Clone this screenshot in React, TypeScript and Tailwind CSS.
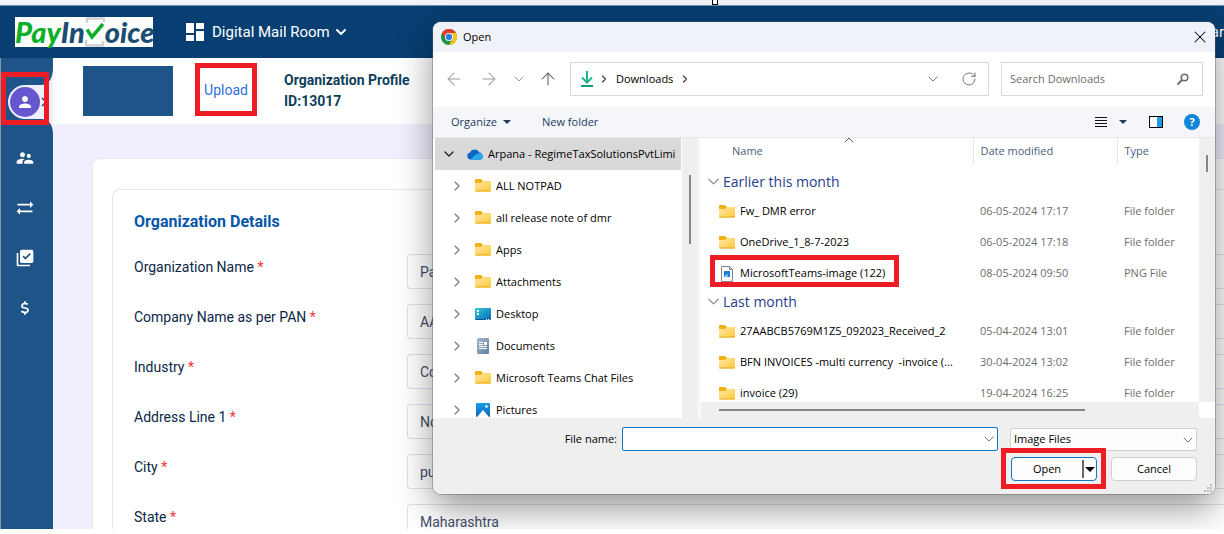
import type { ReactNode } from "react";
import { FaDollarSign } from "react-icons/fa6";
import {
  MdDashboard,
  MdLibraryAddCheck,
  MdPerson,
  MdSupervisorAccount,
  MdSyncAlt,
} from "react-icons/md";
import {
  ArrowLeft,
  ArrowRight,
  ArrowUp,
  ChevronDown,
  ChevronRight,
  ChevronUp,
  RotateCw,
  X,
} from "lucide-react";

type IconKind = "folder" | "desktop" | "documents" | "pictures" | "png";

interface FileRow {
  name: string;
  modified: string;
  type: string;
  icon: IconKind;
  marked?: boolean;
}

const fields = [
  { id: "org-name", label: "Organization Name", value: "Pa" },
  { id: "pan-name", label: "Company Name as per PAN", value: "AA" },
  { id: "industry", label: "Industry", value: "Co" },
  { id: "address", label: "Address Line 1", value: "No" },
  { id: "city", label: "City", value: "pu" },
  { id: "state", label: "State", value: "Maharashtra" },
];

const treeItems: { name: string; icon: IconKind }[] = [
  { name: "ALL NOTPAD", icon: "folder" },
  { name: "all release note of dmr", icon: "folder" },
  { name: "Apps", icon: "folder" },
  { name: "Attachments", icon: "folder" },
  { name: "Desktop", icon: "desktop" },
  { name: "Documents", icon: "documents" },
  { name: "Microsoft Teams Chat Files", icon: "folder" },
  { name: "Pictures", icon: "pictures" },
];

const groups: { title: string; rows: FileRow[] }[] = [
  {
    title: "Earlier this month",
    rows: [
      { name: "Fw_ DMR error", modified: "06-05-2024 17:17", type: "File folder", icon: "folder" },
      { name: "OneDrive_1_8-7-2023", modified: "06-05-2024 17:18", type: "File folder", icon: "folder" },
      { name: "MicrosoftTeams-image (122)", modified: "08-05-2024 09:50", type: "PNG File", icon: "png", marked: true },
    ],
  },
  {
    title: "Last month",
    rows: [
      { name: "27AABCB5769M1Z5_092023_Received_2", modified: "05-04-2024 13:01", type: "File folder", icon: "folder" },
      { name: "BFN INVOICES -multi currency  -invoice (...", modified: "30-04-2024 13:02", type: "File folder", icon: "folder" },
      { name: "invoice (29)", modified: "19-04-2024 16:25", type: "File folder", icon: "folder" },
    ],
  },
];

function FileIcon({ kind }: { kind: IconKind }) {
  if (kind === "desktop") {
    return (
      <svg viewBox="0 0 16 16" className="size-4 shrink-0" aria-hidden>
        <defs>
          <linearGradient id="desk" x1="0" y1="0" x2="1" y2="1">
            <stop offset="0" stopColor="#35c9dc" />
            <stop offset="1" stopColor="#0a66b8" />
          </linearGradient>
        </defs>
        <rect x="0" y="2" width="16" height="12" rx="1" fill="url(#desk)" />
        <path d="M2 4h2v2H2zM2 7h2v2H2z" fill="#e8fbff" />
        <path d="M0 13h11v1H1z" fill="#075a9e" />
        <path d="M11 13h1v1h-1zM13 13h1v1h-1z" fill="#fff" />
      </svg>
    );
  }
  if (kind === "documents") {
    return (
      <svg viewBox="0 0 16 16" className="size-4 shrink-0" aria-hidden>
        <defs>
          <linearGradient id="docs" x1="0" y1="0" x2="1" y2="1">
            <stop offset="0" stopColor="#a9bccf" />
            <stop offset="1" stopColor="#5d7ea3" />
          </linearGradient>
        </defs>
        <rect x="2" y="0" width="12" height="16" rx="1" fill="url(#docs)" />
        <path d="M4 4h4v1H4zM4 6h4v1H4zM9 4h3v3H9zM4 8h8v1H4zM4 10h8v1H4z" fill="#fff" />
      </svg>
    );
  }
  if (kind === "pictures") {
    return (
      <svg viewBox="0 0 16 16" className="size-4 shrink-0" aria-hidden>
        <defs>
          <linearGradient id="pics" x1="0" y1="0" x2="0" y2="1">
            <stop offset="0" stopColor="#1b9ae6" />
            <stop offset="1" stopColor="#0a67b8" />
          </linearGradient>
        </defs>
        <rect x="1" y="1" width="14" height="14" rx="1" fill="url(#pics)" />
        <path d="M2 15 8 8 14 15z" fill="#fff" />
        <circle cx="11.5" cy="4.5" r="1.3" fill="#fff" />
      </svg>
    );
  }
  if (kind === "png") {
    return (
      <svg viewBox="0 0 16 16" className="size-4 shrink-0" aria-hidden>
        <path d="M2.5 0.5H10.5L13.5 3.5V15.5H2.5Z" fill="#fafafa" stroke="#858585" />
        <path d="M10.5 0.5V3.5H13.5" fill="none" stroke="#858585" />
        <rect x="5" y="5" width="6" height="6" fill="#1a7fd4" />
        <path d="M5 11 8 8 9 9 8 11z" fill="#8fd0ff" />
      </svg>
    );
  }
  return (
    <svg viewBox="0 0 16 16" className="size-4 shrink-0" aria-hidden>
      <defs>
        <linearGradient id="folder" x1="0" y1="0" x2="1" y2="1">
          <stop offset="0" stopColor="#ffe9a8" />
          <stop offset="1" stopColor="#ffc83a" />
        </linearGradient>
      </defs>
      <path d="M0 2Q0 1 1 1H6L8 3H15Q16 3 16 4V8H0z" fill="#f5ae13" />
      <path d="M0 5H6L8 3H15Q16 3 16 4V12.5Q16 13.5 15 13.5H1Q0 13.5 0 12.5z" fill="url(#folder)" />
      <path d="M0 12.5H16Q16 13.5 15 13.5H1Q0 13.5 0 12.5z" fill="#e9a820" />
    </svg>
  );
}

function ChromeIcon() {
  return (
    <svg viewBox="0 0 48 48" className="size-4 shrink-0" aria-hidden>
      <circle cx="24" cy="24" r="24" fill="#229342" />
      <path d="M24 12H44.8A24 24 0 0 1 24 48L34.4 30z" fill="#fcc31e" />
      <path d="M13.6 30 3.2 12A24 24 0 0 1 44.8 12H24z" fill="#e33b2e" />
      <circle cx="24" cy="24" r="12" fill="#fff" />
      <circle cx="24" cy="24" r="9.5" fill="#2f7de9" />
    </svg>
  );
}

function Logo() {
  return (
    <a
      href="#"
      aria-label="PayInvoice"
      className="flex h-[30px] w-[138px] items-center bg-white font-[Lato,sans-serif] text-[29px] leading-[26px] font-black text-[#1b4e70] italic"
    >
      <span className="text-[#0db02b]">Pay</span>
      <span>In</span>
      <svg viewBox="0 0 20 30" className="h-[30px] w-5 shrink-0" aria-hidden>
        <path d="M2 6V1.5H19V5M1 23V28.5H18V24" fill="none" stroke="#cfd2d6" strokeWidth="2.5" />
        <path d="M2 12.5 7 20 18 7" fill="none" stroke="#0db02b" strokeWidth="3.5" />
      </svg>
      <span>oice</span>
    </a>
  );
}

function Header() {
  return (
    <header className="flex h-[53px] shrink-0 items-center justify-between border-t border-[#6f8fa9] bg-[#073f73] pl-[15px] font-[Roboto,sans-serif] text-[15px] text-white">
      <div className="flex items-center gap-[30px]">
        <Logo />
        <button type="button" className="flex items-center">
          <MdDashboard className="mr-[5px] size-6" aria-hidden />
          Digital Mail Room
          <ChevronDown className="ml-[3px] size-4" strokeWidth={3} aria-hidden />
        </button>
      </div>
      <span>ar</span>
    </header>
  );
}

function Sidebar() {
  const links = [
    { label: "Users", icon: <MdSupervisorAccount className="size-5" aria-hidden /> },
    { label: "Transfers", icon: <MdSyncAlt className="size-5" aria-hidden /> },
    { label: "Approvals", icon: <MdLibraryAddCheck className="size-5" aria-hidden /> },
    { label: "Payments", icon: <FaDollarSign className="size-[14px]" aria-hidden /> },
  ];

  return (
    <nav className="flex w-[53px] shrink-0 flex-col border-l border-[#8397a8] bg-[#1f5488] pt-[14px] text-white">
      <a href="#" aria-label="Profile" className="relative flex h-[53px] items-center pt-[7px]">
        <svg viewBox="0 0 52 74" className="absolute -top-2 left-0 h-[74px] w-[52px]" aria-hidden>
          <path d="M52 4C52 15 47 21 40 21H24A17 17 0 0 0 24 55H40C47 55 52 60 52 70Z" fill="#efeffd" />
          <path d="m41 34 4 4-4 4" fill="none" stroke="#3b4657" strokeWidth="1.5" />
        </svg>
        <span className="relative ml-[9px] grid size-[30px] place-items-center rounded-full bg-[#6558cf]">
          <MdPerson className="size-[18px]" aria-hidden />
        </span>
        <span className="absolute top-0 left-0 h-[53px] w-12 border-5 border-[#ee1c24]" />
      </a>
      <div className="mt-2 flex flex-col">
        {links.map((link) => (
          <a key={link.label} href="#" aria-label={link.label} className="flex h-[50px] items-center pl-[14px]">
            <span className="grid w-5 place-items-center">{link.icon}</span>
          </a>
        ))}
      </div>
    </nav>
  );
}

function ProfilePage() {
  return (
    <main className="min-w-0 flex-1 bg-[#efeffd] font-[Roboto,sans-serif]">
      <div className="flex h-[66px] items-center bg-white pl-[30px]">
        <div className="h-[50px] w-[90px] bg-[#1f5488]" />
        <button
          type="button"
          className="-mt-1 ml-[22px] h-[53px] w-[62px] border-5 border-[#ee1c24] pt-0.5 text-sm text-[#2f6fde]"
        >
          Upload
        </button>
        <div className="ml-[27px] text-sm leading-[21px] font-bold text-[#0d3f5c]">
          <p>Organization Profile</p>
          <p>ID:13017</p>
        </div>
      </div>

      <div className="mt-[34px] ml-[39px] rounded-tl-lg border-t border-l border-[#e3e9f6] bg-white pt-[30px] pl-[19px]">
        <form className="rounded-tl-lg border-t border-l border-[#dfe7f6] pt-5 pl-[21px]">
          <h2 className="mb-5 text-base leading-6 font-bold text-[#0757a8]">Organization Details</h2>
          {fields.map((field) => (
            <div key={field.id} className="flex h-[50px] items-start">
              <label htmlFor={field.id} className="w-[273px] shrink-0 text-sm leading-[26px] text-[#0b2747]">
                {field.label} <span className="text-[#f5333f]">*</span>
              </label>
              <input
                id={field.id}
                defaultValue={field.value}
                className="h-[35px] min-w-0 flex-1 rounded-l border border-r-0 border-[#d9e0e8] bg-white px-3 text-sm text-[#42506a]"
              />
            </div>
          ))}
        </form>
      </div>
    </main>
  );
}

function IconButton({ label, className = "", children }: { label: string; className?: string; children: ReactNode }) {
  return (
    <button type="button" aria-label={label} className={`grid place-items-center ${className}`}>
      {children}
    </button>
  );
}

function FolderTree() {
  return (
    <div className="ml-0.5 flex w-[263px] shrink-0 bg-[#efefef]">
      <ul className="h-full w-[247px] overflow-hidden bg-white">
        <li className="flex h-8 w-[246px] items-center bg-[#d9d9d9] pl-1.5 whitespace-nowrap">
          <ChevronDown className="size-4 shrink-0 text-[#222]" aria-hidden />
          <svg viewBox="0 0 16 11" className="mr-[5px] ml-[10px] h-[11px] w-4 shrink-0" aria-hidden>
            <path d="M3.5 10.5A3.5 3.5 0 0 1 3 3.6 5 5 0 0 1 12.3 3.5 3.6 3.6 0 0 1 13 10.5z" fill="#0b67c2" />
            <path d="M3 10.7 8.5 5.5 12.5 4.2A3.3 3.3 0 0 1 13 10.8H3.5z" fill="#2aa6ea" />
          </svg>
          Arpana - RegimeTaxSolutionsPvtLimi
        </li>
        {treeItems.map((item) => (
          <li key={item.name} className="flex h-8 items-center pl-[14px] whitespace-nowrap">
            <ChevronRight className="mr-[10px] size-4 shrink-0 text-[#858585]" aria-hidden />
            <FileIcon kind={item.icon} />
            <span className="ml-[5px]">{item.name}</span>
          </li>
        ))}
      </ul>
      <div className="mt-[37px] ml-[7px] h-[69px] w-0.5 bg-[#858585]" />
    </div>
  );
}

function FileList() {
  return (
    <div className="ml-px flex min-w-0 flex-1 border-l border-[#f0f0f0] pl-px">
      <div className="flex min-w-0 flex-1 flex-col">
        <div className="relative h-[264px] overflow-hidden">
          <ChevronUp className="absolute top-[-6px] left-[140px] size-4 text-[#555]" strokeWidth={1.5} aria-hidden />
          <table className="w-full table-fixed border-collapse text-left">
            <thead className="text-[#4c607a]">
              <tr className="h-[26px]">
                <th className="border-r border-[#e5e5e5] pl-[31px] font-normal">Name</th>
                <th className="w-36 border-r border-[#e5e5e5] pl-[7px] font-normal">Date modified</th>
                <th className="w-[82px] pl-[7px] font-normal">Type</th>
              </tr>
              <tr className="h-[5px]">
                <td colSpan={3} />
              </tr>
            </thead>
            {groups.map((group) => (
              <tbody key={group.title}>
                <tr className="h-[27px]">
                  <th colSpan={3} className="pb-0.5 pl-[3px] text-sm leading-5 font-normal text-[#26408b]">
                    <span className="flex items-center">
                      <ChevronDown className="size-[19px] text-[#858585]" strokeWidth={1.5} aria-hidden />
                      {group.title}
                    </span>
                  </th>
                </tr>
                {group.rows.map((row) => (
                  <tr key={row.name} className="h-[31px] text-[#6d6d6d]">
                    <td className="relative pl-[18px]">
                      <span className="flex items-center gap-[5px] whitespace-pre text-black">
                        <FileIcon kind={row.icon} />
                        {row.name}
                      </span>
                      {row.marked && (
                        <span className="absolute top-[-3px] left-[9px] h-8 w-[189px] border-5 border-[#ee1c24]" />
                      )}
                    </td>
                    <td className="pl-[7px]">{row.modified}</td>
                    <td className="pl-[7px]">{row.type}</td>
                  </tr>
                ))}
              </tbody>
            ))}
          </table>
        </div>
        <div className="flex-1 bg-[#efefef] pt-[7px]">
          <div className="ml-[18px] h-0.5 w-[366px] bg-[#858585]" />
        </div>
      </div>
      <div className="h-[264px] w-4 shrink-0 bg-[#efefef] pt-[17px] pl-[7px]">
        <div className="h-[17px] w-0.5 bg-[#858585]" />
      </div>
    </div>
  );
}

function OpenDialog() {
  return (
    <section
      role="dialog"
      aria-label="Open"
      className="absolute top-[22px] right-[9px] left-[433px] flex flex-col overflow-hidden rounded-lg bg-white font-['Open_Sans','Noto_Sans',sans-serif] text-[11px] text-black shadow-[0_0_0_1px_rgba(90,90,90,0.4),0_14px_36px_rgba(0,0,0,0.42)]"
    >
      <div className="flex h-[30px] items-center justify-between bg-[#f0f2f9] pr-[5px] pl-2">
        <span className="flex items-center gap-1.5">
          <ChromeIcon />
          Open
        </span>
        <IconButton label="Close">
          <X className="size-5" strokeWidth={1.25} aria-hidden />
        </IconButton>
      </div>

      <div className="flex h-[55px] items-center gap-3 pr-3 pb-px pl-[11px]">
        <div className="flex w-[114px] shrink-0 items-center text-[#9b9b9b]">
          <IconButton label="Back">
            <ArrowLeft className="size-5" strokeWidth={1.25} aria-hidden />
          </IconButton>
          <IconButton label="Forward" className="ml-[15px]">
            <ArrowRight className="size-5" strokeWidth={1.25} aria-hidden />
          </IconButton>
          <IconButton label="Recent locations" className="ml-3">
            <ChevronDown className="size-4" strokeWidth={1.5} aria-hidden />
          </IconButton>
          <IconButton label="Up one level" className="ml-[11px] text-[#5c5c5c]">
            <ArrowUp className="size-5" strokeWidth={1.25} aria-hidden />
          </IconButton>
        </div>
        <div className="flex h-[34px] min-w-0 flex-1 items-center border border-[#d9d9d9] pl-2">
          <svg viewBox="0 0 16 18" className="h-[18px] w-4" aria-hidden>
            <path d="M8 1V12M3 7.5 8 12.5 13 7.5" fill="none" stroke="#22b58c" strokeWidth="2" />
            <path d="M2 16H14" stroke="#119e83" strokeWidth="2" />
          </svg>
          <ChevronRight className="ml-[3px] size-3 text-[#444]" strokeWidth={2.5} aria-hidden />
          <span className="mx-1.5">Downloads</span>
          <ChevronRight className="size-3 text-[#444]" strokeWidth={2.5} aria-hidden />
          <IconButton label="Previous locations" className="mr-5 ml-auto text-[#777]">
            <ChevronDown className="size-4" strokeWidth={1.5} aria-hidden />
          </IconButton>
          <IconButton label="Refresh" className="mr-[11px] text-[#777]">
            <RotateCw className="size-4" strokeWidth={1.5} aria-hidden />
          </IconButton>
        </div>
        <label className="flex h-[34px] w-[202px] shrink-0 items-center border border-[#d9d9d9] pr-3 pl-2 text-[#6d6d6d]">
          <input
            aria-label="Search Downloads"
            placeholder="Search Downloads"
            className="min-w-0 flex-1 placeholder:text-[#6d6d6d]"
          />
          <svg viewBox="0 0 14 14" className="size-[14px]" aria-hidden>
            <circle cx="8.5" cy="5.5" r="3.3" fill="none" stroke="#6d6d6d" strokeWidth="1.6" />
            <path d="M6 8 1.5 12.5" stroke="#6d6d6d" strokeWidth="2" />
          </svg>
        </label>
      </div>

      <div className="flex h-[31px] items-center border-b border-[#e6e8eb] bg-[#f4f6f9] pr-[15px] pl-[18px] text-[#1c3a63]">
        <button type="button" className="flex items-center gap-1.5">
          Organize
          <svg viewBox="0 0 8 4" className="h-1 w-2" aria-hidden>
            <path d="M0 0h8L4 4z" fill="#1c3a63" />
          </svg>
        </button>
        <button type="button" className="ml-[31px]">
          New folder
        </button>
        <div className="ml-auto flex items-center">
          <IconButton label="View">
            <svg viewBox="0 0 12 11" className="h-[11px] w-3" aria-hidden>
              <path d="M0 .5h12M0 3.5h12M0 6.5h12M0 9.5h12" stroke="#111" />
            </svg>
          </IconButton>
          <IconButton label="View options" className="ml-3">
            <svg viewBox="0 0 8 4" className="h-1 w-2" aria-hidden>
              <path d="M0 0h8L4 4z" fill="#1c3a63" />
            </svg>
          </IconButton>
          <IconButton label="Preview pane" className="ml-[22px]">
            <svg viewBox="0 0 14 12" className="h-3 w-[14px]" aria-hidden>
              <rect x=".5" y=".5" width="13" height="11" fill="#fff" stroke="#000" />
              <path d="M8 1h5v10H8z" fill="#1e9be4" />
            </svg>
          </IconButton>
          <button
            type="button"
            aria-label="Help"
            className="ml-[21px] grid size-4 place-items-center rounded-full bg-[#0f86d6] leading-4 font-bold text-white"
          >
            ?
          </button>
        </div>
      </div>

      <div className="flex h-[280px]">
        <FolderTree />
        <FileList />
      </div>

      <form className="relative flex flex-col gap-1.5 bg-[#efefef] pt-[9px] pr-[18px] pb-[13px]">
        <div className="flex h-6 items-center">
          <label htmlFor="file-name" className="w-[189px] shrink-0 pr-[5px] text-right">
            File name:
          </label>
          <div className="relative min-w-0 flex-1">
            <input id="file-name" className="h-6 w-full rounded-xs border border-[#0f78c8] bg-white px-1.5 pr-6" />
            <ChevronDown className="absolute top-1 right-px size-4 text-[#777]" strokeWidth={1.5} aria-hidden />
          </div>
          <div className="relative ml-3 w-[187px] shrink-0">
            <select
              aria-label="File type"
              className="h-[23px] w-full appearance-none rounded-xs border border-[#d0d0d0] bg-[#fdfdfd] pl-[3px]"
            >
              <option>Image Files</option>
            </select>
            <ChevronDown className="absolute top-1 right-px size-4 text-[#777]" strokeWidth={1.5} aria-hidden />
          </div>
        </div>
        <div className="flex h-6 justify-end gap-[14px]">
          <div className="relative flex w-[86px] items-center rounded border border-[#0f78c8] bg-[#fdfdfd]">
            <button type="button" className="h-full flex-1">
              Open
            </button>
            <button
              type="button"
              aria-label="Open options"
              className="grid h-[18px] w-[14px] place-items-center border-l-2 border-[#666]"
            >
              <svg viewBox="0 0 10 5" className="h-[5px] w-[10px]" aria-hidden>
                <path d="M0 0h10L5 5z" />
              </svg>
            </button>
            <span className="absolute -top-[10px] -left-[11px] h-[41px] w-[105px] border-5 border-[#ee1c24]" />
          </div>
          <button type="button" className="w-[86px] rounded border border-[#d0d0d0] bg-[#fdfdfd]">
            Cancel
          </button>
        </div>
        <svg viewBox="0 0 8 8" className="absolute right-[3px] bottom-[2px] size-2" aria-hidden>
          <path d="M6 0h2v2H6zM3 3h2v2H3zM6 3h2v2H6zM0 6h2v2H0zM3 6h2v2H3zM6 6h2v2H6z" fill="#bdbdbd" />
        </svg>
      </form>
    </section>
  );
}

export default function App() {
  return (
    <div className="flex h-screen flex-col overflow-hidden bg-white pb-[5px]">
      <div className="relative flex min-h-0 flex-1 flex-col overflow-hidden">
        <div className="relative h-[5px] shrink-0 bg-[#f2f3fa]">
          <span className="absolute -top-px left-[712px] size-1.5 border border-black bg-white" />
        </div>
        <Header />
        <div className="flex min-h-0 flex-1">
          <Sidebar />
          <ProfilePage />
        </div>
        <OpenDialog />
      </div>
    </div>
  );
}
